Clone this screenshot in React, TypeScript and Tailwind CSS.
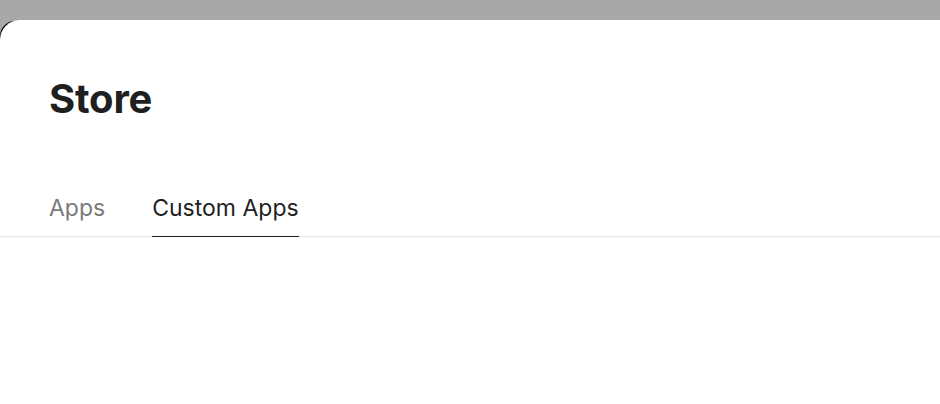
import React from "react";

const tabs = ["Apps", "Custom Apps"];

export default function App() {
  const active = "Custom Apps";

  return (
    <div
      className="relative w-[940px] h-[404px] overflow-hidden bg-[#a8a8a8]"
      style={{ fontFamily: "Inter, 'Noto Sans', sans-serif" }}
    >
      {/* dark edge peeking behind the sheet corner */}
      <div className="absolute left-0 top-[21px] w-[30px] h-[30px] rounded-tl-[15px] bg-black" />

      {/* Sheet */}
      <section className="relative mt-[20px] h-[384px] bg-white rounded-tl-[20px]">
        <h1 className="px-[49px] pt-[55px] text-[40px] leading-[48px] font-bold text-[#1f1f1f] tracking-[-0.2px]">
          Store
        </h1>

        <nav className="mt-[71px] flex items-end gap-[47px] px-[49px] border-b border-[#e6e6e6]">
          {tabs.map((t) => (
            <button
              key={t}
              type="button"
              className={`-mb-px pb-[14px] text-[23px] leading-[28px] border-b ${
                t === active
                  ? "text-[#1f1f1f] border-[#1f1f1f]"
                  : "text-[#7a7a7a] border-transparent"
              }`}
            >
              {t}
            </button>
          ))}
        </nav>
      </section>
    </div>
  );
}
